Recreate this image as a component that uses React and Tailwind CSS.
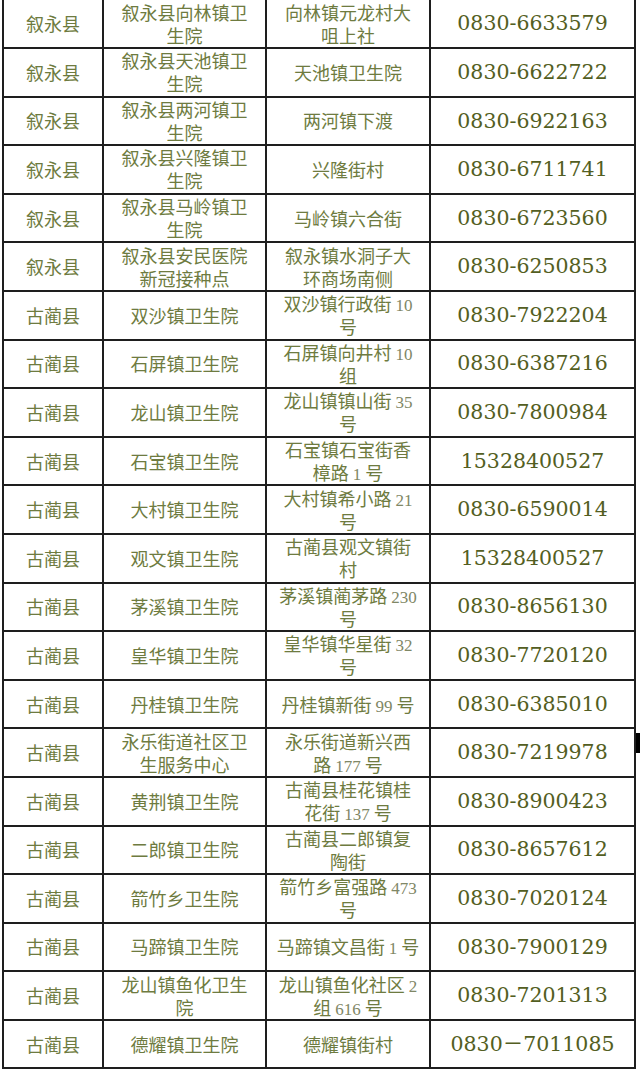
import React from "react";

const rows = [
  ["叙永县", ["叙永县向林镇卫", "生院"], ["向林镇元龙村大", "咀上社"], "0830-6633579"],
  ["叙永县", ["叙永县天池镇卫", "生院"], ["天池镇卫生院"], "0830-6622722"],
  ["叙永县", ["叙永县两河镇卫", "生院"], ["两河镇下渡"], "0830-6922163"],
  ["叙永县", ["叙永县兴隆镇卫", "生院"], ["兴隆街村"], "0830-6711741"],
  ["叙永县", ["叙永县马岭镇卫", "生院"], ["马岭镇六合街"], "0830-6723560"],
  ["叙永县", ["叙永县安民医院", "新冠接种点"], ["叙永镇水洞子大", "环商场南侧"], "0830-6250853"],
  ["古蔺县", ["双沙镇卫生院"], ["双沙镇行政街 10", "号"], "0830-7922204"],
  ["古蔺县", ["石屏镇卫生院"], ["石屏镇向井村 10", "组"], "0830-6387216"],
  ["古蔺县", ["龙山镇卫生院"], ["龙山镇镇山街 35", "号"], "0830-7800984"],
  ["古蔺县", ["石宝镇卫生院"], ["石宝镇石宝街香", "樟路 1 号"], "15328400527"],
  ["古蔺县", ["大村镇卫生院"], ["大村镇希小路 21", "号"], "0830-6590014"],
  ["古蔺县", ["观文镇卫生院"], ["古蔺县观文镇街", "村"], "15328400527"],
  ["古蔺县", ["茅溪镇卫生院"], ["茅溪镇蔺茅路 230", "号"], "0830-8656130"],
  ["古蔺县", ["皇华镇卫生院"], ["皇华镇华星街 32", "号"], "0830-7720120"],
  ["古蔺县", ["丹桂镇卫生院"], ["丹桂镇新街 99 号"], "0830-6385010"],
  ["古蔺县", ["永乐街道社区卫", "生服务中心"], ["永乐街道新兴西", "路 177 号"], "0830-7219978"],
  ["古蔺县", ["黄荆镇卫生院"], ["古蔺县桂花镇桂", "花街 137 号"], "0830-8900423"],
  ["古蔺县", ["二郎镇卫生院"], ["古蔺县二郎镇复", "陶街"], "0830-8657612"],
  ["古蔺县", ["箭竹乡卫生院"], ["箭竹乡富强路 473", "号"], "0830-7020124"],
  ["古蔺县", ["马蹄镇卫生院"], ["马蹄镇文昌街 1 号"], "0830-7900129"],
  ["古蔺县", ["龙山镇鱼化卫生", "院"], ["龙山镇鱼化社区 2", "组 616 号"], "0830-7201313"],
  ["古蔺县", ["德耀镇卫生院"], ["德耀镇街村"], "0830－7011085"],
];

function Mixed({ text }) {
  const parts = text.split(/(\d+)/);
  return (
    <>
      {parts.map((p, i) =>
        /^\d+$/.test(p) ? (
          <span key={i} className="font-['Liberation_Serif',serif] text-[17px] text-[#7f8766]">
            {p}
          </span>
        ) : (
          <span key={i}>{p}</span>
        )
      )}
    </>
  );
}

function Lines({ lines, mixed }) {
  return (
    <div className="flex flex-col items-center">
      {lines.map((l, i) => (
        <div key={i} className="whitespace-nowrap leading-[23px] h-[23px]">
          {mixed ? <Mixed text={l} /> : l}
        </div>
      ))}
    </div>
  );
}

export default function App() {
  return (
    <div className="relative w-[640px] h-[1077px] bg-white overflow-hidden">
      <div className="ml-[2px] w-[634px] grid grid-cols-[100px_163px_164px_205px] grid-rows-[49px_repeat(21,48.6px)] border-l-2 border-[#1e1e1e] font-['Noto_Sans_CJK_SC',sans-serif] text-[18px] text-[#6e7b40]">
        {rows.map((r, i) => (
          <React.Fragment key={i}>
            <div className="flex items-center justify-center border-r-2 border-b-2 border-[#1e1e1e]">
              {r[0]}
            </div>
            <div className="flex items-center justify-center border-r-2 border-b-2 border-[#1e1e1e]">
              <Lines lines={r[1]} />
            </div>
            <div className="flex items-center justify-center border-r-2 border-b-2 border-[#1e1e1e]">
              <Lines lines={r[2]} mixed />
            </div>
            <div className="flex items-center justify-center border-r-2 border-b-2 border-[#1e1e1e] font-['DejaVu_Serif','Noto_Sans_CJK_SC',serif] text-[20.5px] text-[#535e22]">
              {r[3]}
            </div>
          </React.Fragment>
        ))}
      </div>
      <div className="absolute left-[636px] top-[733px] w-[4px] h-[20px] bg-black"></div>
    </div>
  );
}
